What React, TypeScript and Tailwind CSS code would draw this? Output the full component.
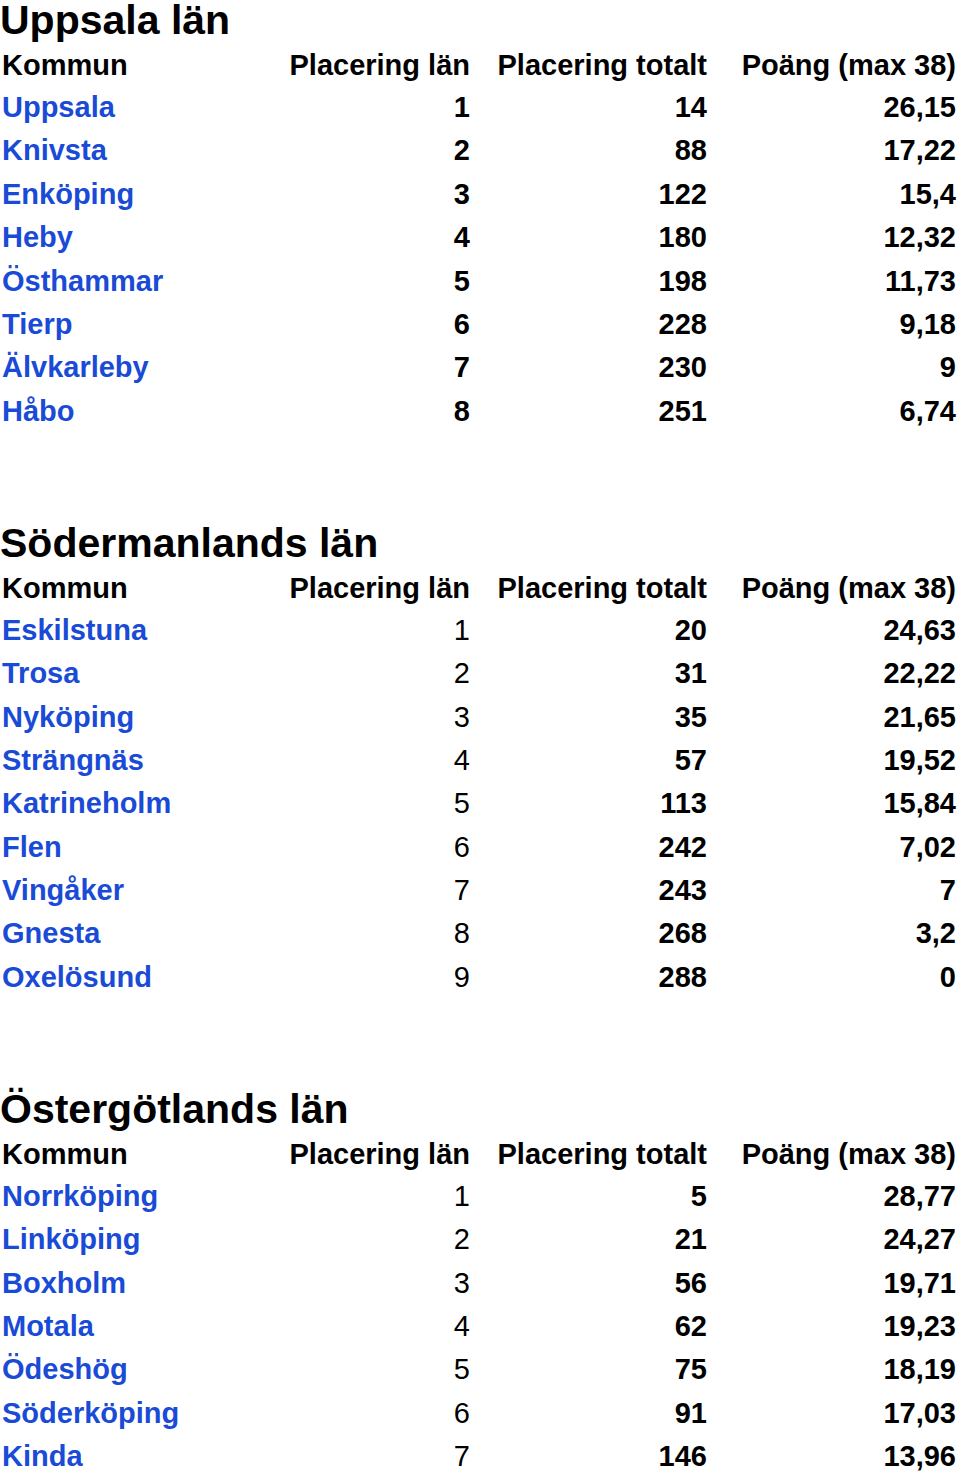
type Row = { name: string; lan: number; total: number; points: string };

type County = { title: string; boldLan: boolean; rows: Row[] };

const counties: County[] = [
  {
    title: 'Uppsala län',
    boldLan: true,
    rows: [
      { name: 'Uppsala', lan: 1, total: 14, points: '26,15' },
      { name: 'Knivsta', lan: 2, total: 88, points: '17,22' },
      { name: 'Enköping', lan: 3, total: 122, points: '15,4' },
      { name: 'Heby', lan: 4, total: 180, points: '12,32' },
      { name: 'Östhammar', lan: 5, total: 198, points: '11,73' },
      { name: 'Tierp', lan: 6, total: 228, points: '9,18' },
      { name: 'Älvkarleby', lan: 7, total: 230, points: '9' },
      { name: 'Håbo', lan: 8, total: 251, points: '6,74' },
    ],
  },
  {
    title: 'Södermanlands län',
    boldLan: false,
    rows: [
      { name: 'Eskilstuna', lan: 1, total: 20, points: '24,63' },
      { name: 'Trosa', lan: 2, total: 31, points: '22,22' },
      { name: 'Nyköping', lan: 3, total: 35, points: '21,65' },
      { name: 'Strängnäs', lan: 4, total: 57, points: '19,52' },
      { name: 'Katrineholm', lan: 5, total: 113, points: '15,84' },
      { name: 'Flen', lan: 6, total: 242, points: '7,02' },
      { name: 'Vingåker', lan: 7, total: 243, points: '7' },
      { name: 'Gnesta', lan: 8, total: 268, points: '3,2' },
      { name: 'Oxelösund', lan: 9, total: 288, points: '0' },
    ],
  },
  {
    title: 'Östergötlands län',
    boldLan: false,
    rows: [
      { name: 'Norrköping', lan: 1, total: 5, points: '28,77' },
      { name: 'Linköping', lan: 2, total: 21, points: '24,27' },
      { name: 'Boxholm', lan: 3, total: 56, points: '19,71' },
      { name: 'Motala', lan: 4, total: 62, points: '19,23' },
      { name: 'Ödeshög', lan: 5, total: 75, points: '18,19' },
      { name: 'Söderköping', lan: 6, total: 91, points: '17,03' },
      { name: 'Kinda', lan: 7, total: 146, points: '13,96' },
    ],
  },
];

// fixed column widths so the right edges line up across all three tables
const cols = 'grid grid-cols-[288px_184px_237px_1fr]';

function CountyTable({ county }: { county: County }) {
  return (
    <section className="mb-[89.6px]">
      <h2 className="mb-[4px] text-[41px] font-bold leading-[40px] text-black">{county.title}</h2>
      <div className={`${cols} h-[42px] text-[29px] font-bold leading-[42px] text-black`}>
        <div className="pl-[2px]">Kommun</div>
        <div className="pr-[2px] text-right">Placering län</div>
        <div className="pr-[2px] text-right">Placering totalt</div>
        <div className="pr-[4px] text-right whitespace-nowrap">Poäng (max 38)</div>
      </div>
      {county.rows.map(r => (
        <div key={r.name} className={`${cols} h-[43.4px] text-[29px] leading-[43.4px] text-black`}>
          <div className="pl-[2px]">
            <a href="#" className="font-bold text-[#1a4bd6]">{r.name}</a>
          </div>
          <div className={`pr-[2px] text-right ${county.boldLan ? 'font-bold' : 'font-normal'}`}>{r.lan}</div>
          <div className="pr-[2px] text-right font-bold">{r.total}</div>
          <div className="pr-[4px] text-right font-bold">{r.points}</div>
        </div>
      ))}
    </section>
  );
}

export default function App() {
  return (
    <div className="w-[960px] bg-white font-['Liberation_Sans',Arial,sans-serif]">
      {counties.map(c => (
        <CountyTable key={c.title} county={c} />
      ))}
    </div>
  );
}
